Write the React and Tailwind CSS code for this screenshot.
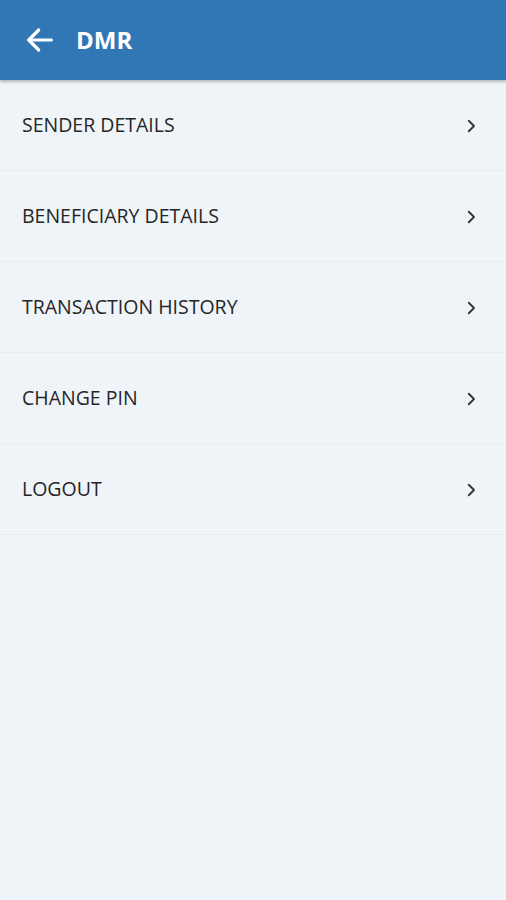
import React from "react";

const items = [
  "SENDER DETAILS",
  "BENEFICIARY DETAILS",
  "TRANSACTION HISTORY",
  "CHANGE PIN",
  "LOGOUT",
];

const App = () => {
  return (
    <div
      className="min-h-[900px] bg-[#eff4f9]"
      style={{ fontFamily: '"Open Sans", "Noto Sans", sans-serif' }}
    >
      {/* Toolbar */}
      <div className="relative z-10 flex h-[80px] items-center bg-[#3277b5] shadow-[0_2px_3px_rgba(0,0,0,0.25)]">
        <svg
          className="ml-[24px] h-[32px] w-[32px]"
          viewBox="0 0 24 24"
          fill="none"
          stroke="white"
          strokeWidth="2.4"
          strokeLinecap="round"
          strokeLinejoin="round"
        >
          <path d="M20.5 12H4" />
          <path d="M11 4.5 3.5 12l7.5 7.5" />
        </svg>
        <h1 className="ml-[20px] text-[24px] font-bold text-white">DMR</h1>
      </div>

      {/* Menu */}
      <ul>
        {items.map((item) => (
          <li
            key={item}
            className="flex h-[91px] items-center justify-between border-b border-[#e6ebf0] pl-[22px] pr-[26px]"
          >
            <span className="text-[19.5px] leading-none text-[#262626]">{item}</span>
            <svg
              className="mt-[2px] h-[18px] w-[18px]"
              viewBox="0 0 24 24"
              fill="none"
              stroke="#333"
              strokeWidth="2.4"
              strokeLinecap="round"
              strokeLinejoin="round"
            >
              <path d="M9 5l7 7-7 7" />
            </svg>
          </li>
        ))}
      </ul>
    </div>
  );
};

export default App;
